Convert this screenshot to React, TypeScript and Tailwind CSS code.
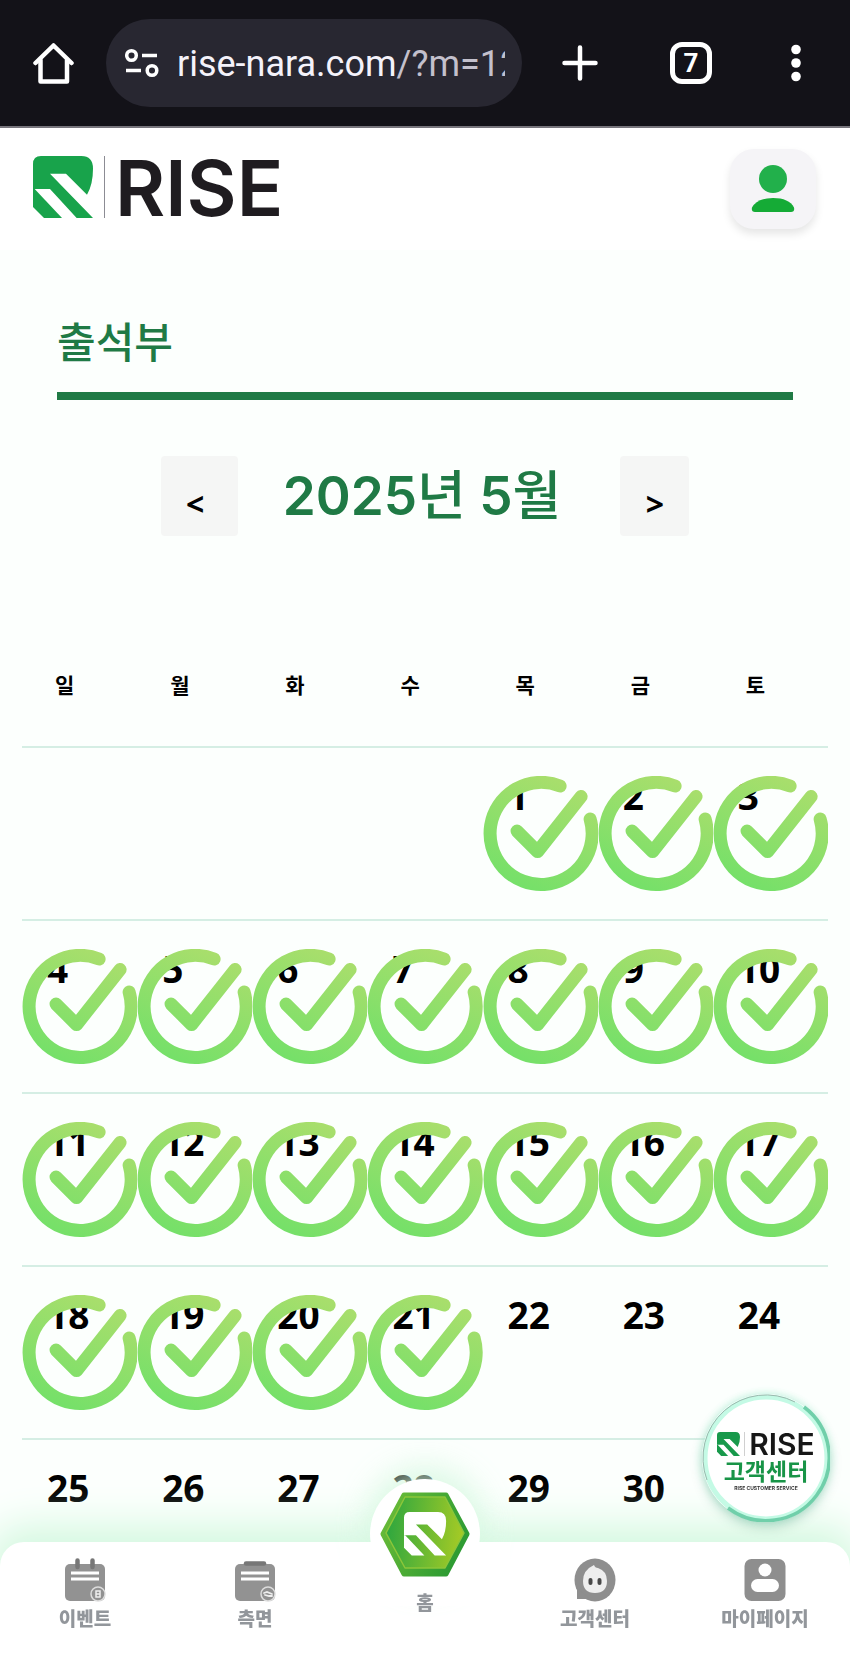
import React from "react";

const weekdays = ["일", "월", "화", "수", "목", "금", "토"];

const weeks = [
  [null, null, null, null, 1, 2, 3],
  [4, 5, 6, 7, 8, 9, 10],
  [11, 12, 13, 14, 15, 16, 17],
  [18, 19, 20, 21, 22, 23, 24],
  [25, 26, 27, 28, 29, 30, 31],
];

const lastChecked = 21;

const LogoMark = ({ className }: { className: string }) => (
  <svg viewBox="0 0 180 186" className={className} fill="currentColor" aria-hidden="true">
    <path d="M24 0H145Q180 0 180 38Q180 85 162 116L99 53H51L180 186H131L51 99H0V24Q0 0 24 0Z" />
    <path d="M0 99H5L87 186H33L0 153Z" />
  </svg>
);

const CheckStamp = () => (
  <svg viewBox="0 0 115 115" className="absolute left-0 top-7 w-full" fill="none" aria-label="출석 완료">
    <defs>
      <linearGradient id="stamp" gradientUnits="userSpaceOnUse" x1="45" y1="112" x2="90" y2="8">
        <stop offset="0" stopColor="#76e069" />
        <stop offset="1" stopColor="#a9de6c" />
      </linearGradient>
    </defs>
    <g stroke="url(#stamp)" strokeWidth="13" strokeLinecap="round" strokeLinejoin="round">
      <path d="M77 10A51 51 0 1 0 107 43" />
      <path d="M34 55L54.500 75.500L98 20.500" />
    </g>
  </svg>
);

const BrowserBar = () => (
  <div className="flex h-32 items-center border-b-2 border-[#77757c] bg-[#131218] pl-8 pr-[46px] text-white">
    <button aria-label="Home">
      <svg viewBox="0 0 42 42" className="size-[42px]" fill="none" stroke="currentColor" strokeWidth="4.500" strokeLinejoin="round" strokeLinecap="round">
        <path d="M3.500 21L21.500 3.500L39.500 21" />
        <path d="M8.500 18V39.500H35V18" />
      </svg>
    </button>
    <div className="ml-8 flex h-[88px] min-w-0 flex-1 items-center rounded-full bg-[#282731] pl-[19px] pr-[17px]">
      <svg viewBox="0 0 34 30" className="h-[30px] w-[34px] shrink-0" fill="none" stroke="currentColor" strokeWidth="3.500">
        <circle cx="6.500" cy="7.500" r="4.800" />
        <path d="M17 7.500H32M1 22.500H16" />
        <circle cx="27" cy="22.500" r="4.800" />
      </svg>
      <div className="ml-[18px] min-w-0 flex-1 overflow-hidden whitespace-nowrap pt-0.5 font-[Roboto,sans-serif] text-4xl text-[#f4f2fa]">
        rise-nara.com<span className="text-[#c3c0cc]">/?m=12</span>
      </div>
    </div>
    <button aria-label="New tab" className="ml-10">
      <svg viewBox="0 0 36 36" className="size-9" stroke="currentColor" strokeWidth="4.500" strokeLinecap="round">
        <path d="M18 2.500V33.500M2.500 18H33.500" />
      </svg>
    </button>
    <button
      aria-label="Tabs"
      className="ml-[72px] flex size-[42px] items-center justify-center rounded-xl border-[5px] border-white font-[Roboto,sans-serif] text-[26px] font-bold leading-none"
    >
      7
    </button>
    <button aria-label="Menu" className="ml-[76px]">
      <svg viewBox="0 0 16 38" className="h-[38px] w-4" fill="currentColor">
        <circle cx="8" cy="5.500" r="4.800" />
        <circle cx="8" cy="19" r="4.800" />
        <circle cx="8" cy="32.500" r="4.800" />
      </svg>
    </button>
  </div>
);

const Header = () => (
  <header className="flex h-[122px] items-center justify-between bg-white pl-[33px] pr-[34px]">
    <a href="/" className="flex items-center pb-1">
      <LogoMark className="h-[62px] w-[60px] text-[#18a34b]" />
      <span className="ml-[11px] h-[62px] w-px bg-[#8c8c94]" />
      <span className="ml-[10px] pt-0.5 font-[Inter,sans-serif] text-[77px] font-semibold leading-[62px] text-[#1f1c20]">RISE</span>
    </a>
    <button
      aria-label="내 정보"
      className="flex h-20 w-[86px] items-center justify-center rounded-3xl bg-[#f5f4f7] shadow-[0_5px_8px_rgba(0,0,0,0.1)]"
    >
      <svg viewBox="0 0 44 50" className="h-[50px] w-11" aria-hidden="true">
        <circle cx="22" cy="15" r="14" fill="#22b04b" />
        <path d="M4 48Q0 48 1 43.500Q6 34 22 34Q38 34 43 43.500Q44 48 40 48Z" fill="#15ab36" />
      </svg>
    </button>
  </header>
);

const Calendar = () => (
  <table className="mt-[88px] w-full table-fixed border-collapse text-left text-black">
    <thead>
      <tr className="h-[123px] border-b-2 border-[#d5eee4]">
        {weekdays.map((day) => (
          <th key={day} scope="col" className="pl-[33px] text-[21px] font-bold">
            {day}
          </th>
        ))}
      </tr>
    </thead>
    <tbody className="font-['Noto_Sans',sans-serif]">
      {weeks.map((week, i) => (
        <tr key={i} className="h-[173px] border-b-2 border-[#d5eee4] last:border-b-0">
          {week.map((date, j) => (
            <td key={j} className="relative p-0 pl-[25px] pt-7 align-top text-[37px] font-bold leading-10">
              {date}
              {date && date <= lastChecked && <CheckStamp />}
            </td>
          ))}
        </tr>
      ))}
    </tbody>
  </table>
);

const SupportBadge = () => (
  <a
    href="/support"
    className="fixed bottom-[148px] right-5 flex size-32 flex-col items-center justify-center rounded-full bg-white pt-1.5 shadow-[0_5px_12px_rgba(30,110,80,0.25),0_0_8px_#c4fae5]"
  >
    <svg viewBox="0 0 128 128" className="absolute inset-0" fill="none" aria-hidden="true">
      <circle cx="64" cy="64" r="61" stroke="#c4fae5" strokeWidth="5" />
      <path d="M102 13A63 63 0 0 1 26 114" stroke="#70cfaa" strokeWidth="3.500" />
      <path d="M5 86A63 63 0 0 1 93 8" stroke="#9bb9ae" strokeWidth="1" />
    </svg>
    <span className="flex items-center">
      <LogoMark className="h-6 w-[23px] text-[#18994b]" />
      <span className="ml-1 h-6 w-px bg-[#d0d0d0]" />
      <span className="ml-1 font-[Inter,sans-serif] text-[30px] font-semibold leading-6 text-[#171717]">RISE</span>
    </span>
    <span className="text-[23px] font-bold leading-7 text-[#189447]">고객센터</span>
    <span className="mt-0.5 font-[Inter,sans-serif] text-[5px] font-bold leading-none text-[#333]">RISE CUSTOMER SERVICE</span>
  </a>
);

const EventIcon = () => (
  <svg viewBox="0 0 42 44" className="h-11 w-[42px]" aria-hidden="true">
    <rect x="1" y="6" width="40" height="37" rx="5" fill="#929292" />
    <path d="M13.500 2.500V9M28.500 2.500V9" stroke="#777" strokeWidth="4.500" strokeLinecap="round" />
    <path d="M7 15H35M7 21H35" stroke="#fff" strokeWidth="3" />
    <circle cx="34" cy="36" r="7" fill="#929292" stroke="#ddd" strokeWidth="1.500" />
    <path d="M32 33H36V39H32ZM32 36H36" fill="none" stroke="#eee" strokeWidth="1.500" />
  </svg>
);

const SideIcon = () => (
  <svg viewBox="0 0 42 44" className="h-11 w-[42px]" aria-hidden="true">
    <rect x="1" y="6" width="40" height="37" rx="5" fill="#929292" />
    <path d="M12 5.500H30" stroke="#777" strokeWidth="4.500" strokeLinecap="round" />
    <path d="M7 15H35M7 21H35" stroke="#fff" strokeWidth="3" />
    <circle cx="34" cy="36" r="7" fill="#929292" stroke="#ddd" strokeWidth="1.500" />
    <path d="M30 35L33 34L38 36M31 37L35 38L38 38" fill="none" stroke="#eee" strokeWidth="1.800" strokeLinecap="round" />
  </svg>
);

const SupportIcon = () => (
  <svg viewBox="0 0 42 44" className="h-11 w-[42px]" aria-hidden="true">
    <ellipse cx="21" cy="22" rx="20.500" ry="21.500" fill="#8e8e8e" />
    <path d="M3 30V41H16Z" fill="#8e8e8e" />
    <path d="M20 7Q21 10 24 10Q33 13 33 23Q33 35 21 35Q9 35 9 23Q9 12 20 7Z" fill="#eee" />
    <rect x="14.500" y="20" width="4" height="7" rx="2" fill="#484848" />
    <rect x="23.500" y="20" width="4" height="7" rx="2" fill="#484848" />
  </svg>
);

const MyPageIcon = () => (
  <svg viewBox="0 0 42 44" className="h-11 w-[42px]" aria-hidden="true">
    <rect x="0.500" y="1" width="41" height="42" rx="7" fill="#8e8e8e" />
    <circle cx="21" cy="12" r="6.500" fill="#fff" />
    <rect x="7" y="21" width="28" height="13" rx="6.500" fill="#fff" />
  </svg>
);

const HomeHexagon = () => (
  <svg viewBox="0 0 90 86" className="h-[86px] w-[90px]" aria-hidden="true">
    <defs>
      <linearGradient id="hexFace" x1="0" y1="0.400" x2="1" y2="0.500">
        <stop offset="0" stopColor="#2da63f" />
        <stop offset="1" stopColor="#a6cb25" />
      </linearGradient>
      <linearGradient id="hexEdge" x1="0" y1="0" x2="1" y2="0.400">
        <stop offset="0" stopColor="#6fbe38" />
        <stop offset="1" stopColor="#2f9c33" />
      </linearGradient>
    </defs>
    <path d="M24 3H66L87 42L66 82H24L3 42Z" fill="url(#hexEdge)" stroke="url(#hexEdge)" strokeWidth="5" strokeLinejoin="round" />
    <path d="M25 5H65L84 41L65 76H25L6 41Z" fill="url(#hexFace)" stroke="#8cc63a" strokeWidth="1.500" strokeLinejoin="round" />
    <g transform="translate(24 20) scale(0.234)" fill="#fff">
      <path d="M24 0H145Q180 0 180 38Q180 85 162 116L99 53H51L180 186H131L51 99H0V24Q0 0 24 0Z" />
      <path d="M0 99H5L87 186H33L0 153Z" />
    </g>
  </svg>
);

const navItems = [
  { label: "이벤트", href: "/event", icon: <EventIcon /> },
  { label: "측면", href: "/side", icon: <SideIcon /> },
  { label: "홈", href: "/", icon: null },
  { label: "고객센터", href: "/support", icon: <SupportIcon /> },
  { label: "마이페이지", href: "/mypage", icon: <MyPageIcon /> },
];

const BottomNav = () => (
  <nav className="fixed inset-x-0 bottom-0 flex h-32 rounded-t-3xl bg-white text-[19px] font-black leading-7 text-[#92969b] shadow-[0_-6px_40px_10px_#d3f8df]">
    {navItems.map((item) => (
      <a key={item.label} href={item.href} className="relative flex flex-1 flex-col items-center pt-4">
        {item.icon ? (
          <>
            {item.icon}
            <span className="mt-0.5">{item.label}</span>
          </>
        ) : (
          <>
            <span className="absolute -top-[63px] flex size-[110px] items-center justify-center rounded-full bg-white shadow-[0_-8px_30px_4px_rgba(211,248,223,0.8)]" />
            <span className="absolute inset-x-0 top-0 h-16 bg-white" />
            <span className="absolute -top-[50px]">
              <HomeHexagon />
            </span>
            <span className="relative mt-[30px]">{item.label}</span>
          </>
        )}
      </a>
    ))}
  </nav>
);

const App = () => {
  return (
    <div className="min-h-screen bg-[#fcfffd] font-['Noto_Sans_CJK_KR',sans-serif]">
      <BrowserBar />
      <Header />
      <main className="px-[22px]">
        <h1 className="mx-[35px] border-b-8 border-[#1f7a45] pb-[22px] pt-[60px] text-[42px] font-medium leading-[60px] text-[#1f7a45]">
          출석부
        </h1>
        <div className="mt-14 flex items-center justify-center">
          <button aria-label="이전 달" className="h-20 w-[77px] rounded-sm bg-[#f5f6f5] pr-2 pt-4 font-['Noto_Sans',sans-serif] text-[32px] font-bold leading-none">
            &lt;
          </button>
          <h2 className="ml-[45px] mr-[59px] whitespace-nowrap font-[Inter,'Noto_Sans_CJK_KR',sans-serif] text-[53px] font-semibold leading-[80px] text-[#1f7a45]">
            2025<span className="font-medium">년</span> 5<span className="font-medium">월</span>
          </h2>
          <button aria-label="다음 달" className="h-20 w-[69px] rounded-sm bg-[#f5f6f5] pt-4 font-['Noto_Sans',sans-serif] text-[32px] font-bold leading-none">
            &gt;
          </button>
        </div>
        <Calendar />
      </main>
      <BottomNav />
      <SupportBadge />
    </div>
  );
};

export default App;
